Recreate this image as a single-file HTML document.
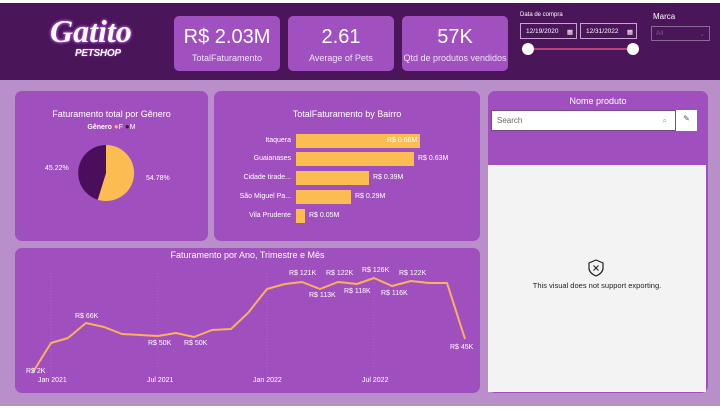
<!DOCTYPE html>
<html><head><meta charset="utf-8"><style>
*{margin:0;padding:0;box-sizing:border-box}
body{width:720px;height:411px;background:#fff;font-family:"Liberation Sans",sans-serif;position:relative;overflow:hidden}
.a{position:absolute}
.bg{left:0;top:3px;width:720px;height:403px;background:#b98fc9}
.top{left:0;top:3px;width:720px;height:77px;background:#4a1559}
.kpi{background:#a150c0;border-radius:5px;color:#fff;text-align:center}
.kpi b{display:block;font-weight:normal;font-size:20px;margin-top:10px}
.kpi i{display:block;font-style:normal;font-size:9px;margin-top:4px;color:#f1e3f6}
.panel{background:#a04fbe;border-radius:7px}
.t{color:#fff;font-size:10px;text-align:center;width:100%}
.sm{font-size:7px;color:#fff}
</style></head><body>
<div class="a bg"></div>
<div class="a top"></div>
<div class="a" style="left:50px;top:13px;color:#fff;font-family:'Liberation Serif',serif;font-style:italic;font-weight:bold;font-size:32px;text-shadow:0 0 3px #a24bc6,0 0 3px #a24bc6,0 0 2px #a24bc6">Gatito</div>
<div class="a" style="left:75px;top:48px;color:#fff;font-weight:bold;font-style:italic;font-size:10px;letter-spacing:-0.3px;text-shadow:0 0 2px #a24bc6">PETSHOP</div>
<div class="a kpi" style="left:174px;top:16px;width:106px;height:55px"><b>R$ 2.03M</b><i>TotalFaturamento</i></div>
<div class="a kpi" style="left:288px;top:16px;width:106px;height:55px"><b>2.61</b><i>Average of Pets</i></div>
<div class="a kpi" style="left:402px;top:16px;width:106px;height:55px"><b>57K</b><i>Qtd de produtos vendidos</i></div>
<div class="a sm" style="left:520px;top:12px;font-size:6px">Data de compra</div>
<div class="a sm" style="left:520px;top:23px;width:57px;height:16px;border:1px solid #c9a3d6;padding:4px 0 0 5px;font-size:6.5px">12/19/2020 <span style="float:right;margin-right:3px">▦</span></div>
<div class="a sm" style="left:580px;top:23px;width:57px;height:16px;border:1px solid #c9a3d6;padding:4px 0 0 5px;font-size:6.5px">12/31/2022 <span style="float:right;margin-right:3px">▦</span></div>
<div class="a" style="left:530px;top:48px;width:103px;height:2px;background:#c0407a"></div>
<div class="a" style="left:522px;top:43px;width:12px;height:12px;border-radius:50%;background:#fff"></div>
<div class="a" style="left:627px;top:43px;width:12px;height:12px;border-radius:50%;background:#fff"></div>
<div class="a" style="left:653px;top:12px;color:#fff;font-size:8px">Marca</div>
<div class="a" style="left:651px;top:26px;width:59px;height:15px;border:1px solid #8a6a99;color:#7e5a8f;font-size:6.5px;padding:3px 0 0 4px">All<span style="float:right;margin-right:4px">⌄</span></div>

<div class="a panel" style="left:15px;top:91px;width:193px;height:150px">
<div class="t" style="margin-top:18px;font-size:9px">Faturamento total por Gênero</div>
<div class="t sm" style="margin-top:3px"><b>Gênero</b> <span style="color:#fbb94e;font-size:8px">●</span>F <span style="color:#4a0f5c;font-size:8px">●</span>M</div>
</div>
<svg class="a" style="left:0;top:0" width="720" height="411">
<path d="M106 173 L106 145 A28 28 0 1 1 97.7 199.7 Z" fill="#fbbd52"/>
<path d="M106 173 L97.7 199.7 A28 28 0 0 1 106 145 Z" fill="#4a0f5c"/>
</svg>
<div class="a sm" style="left:45px;top:165px">45.22%</div>
<div class="a sm" style="left:146px;top:175px">54.78%</div>

<div class="a panel" style="left:214px;top:91px;width:266px;height:150px">
<div class="t" style="margin-top:18px;font-size:9px">TotalFaturamento by Bairro</div>
</div>
<div class="a" style="left:296px;top:134px;width:124px;height:14px;background:#fbbd52"></div>
<div class="a" style="left:296px;top:152px;width:118px;height:14px;background:#fbbd52"></div>
<div class="a" style="left:296px;top:171px;width:73px;height:14px;background:#fbbd52"></div>
<div class="a" style="left:296px;top:190px;width:55px;height:14px;background:#fbbd52"></div>
<div class="a" style="left:296px;top:209px;width:9px;height:14px;background:#fbbd52"></div>
<div class="a sm" style="left:200px;width:91px;text-align:right;top:137px">Itaquera</div>
<div class="a sm" style="left:200px;width:91px;text-align:right;top:155px">Guaianases</div>
<div class="a sm" style="left:200px;width:91px;text-align:right;top:174px">Cidade tirade...</div>
<div class="a sm" style="left:200px;width:91px;text-align:right;top:193px">São Miguel Pa...</div>
<div class="a sm" style="left:200px;width:91px;text-align:right;top:212px">Vila Prudente</div>
<div class="a sm" style="left:387px;top:137px">R$ 0.66M</div>
<div class="a sm" style="left:418px;top:155px">R$ 0.63M</div>
<div class="a sm" style="left:373px;top:174px">R$ 0.39M</div>
<div class="a sm" style="left:355px;top:193px">R$ 0.29M</div>
<div class="a sm" style="left:309px;top:212px">R$ 0.05M</div>

<div class="a panel" style="left:15px;top:248px;width:465px;height:145px">
<div class="t" style="margin-top:2px;font-size:9px">Faturamento por Ano, Trimestre e Mês</div>
</div>
<svg class="a" style="left:0;top:0" width="720" height="411">
<g stroke="#b56ccf" stroke-dasharray="1 2" stroke-width="0.6"><line x1="51" y1="270" x2="51" y2="375"/><line x1="158" y1="270" x2="158" y2="375"/><line x1="267" y1="270" x2="267" y2="375"/><line x1="374" y1="270" x2="374" y2="375"/></g>
<polyline fill="none" stroke="#fbb15e" stroke-width="2" stroke-linejoin="round" points="33,372 51,343 68,338 86,323 104,327 122,334 140,335 158,336 176,333 194,337 212,330 231,329 248,313 267,289 285,284 302,282 320,289 338,282 357,284 374,278 392,286 411,281 429,283 447,283 465,339"/>
</svg>
<div class="a sm" style="left:26px;top:368px">R$ 2K</div>
<div class="a sm" style="left:75px;top:313px">R$ 66K</div>
<div class="a sm" style="left:148px;top:340px">R$ 50K</div>
<div class="a sm" style="left:184px;top:340px">R$ 50K</div>
<div class="a sm" style="left:289px;top:270px">R$ 121K</div>
<div class="a sm" style="left:309px;top:292px">R$ 113K</div>
<div class="a sm" style="left:326px;top:270px">R$ 122K</div>
<div class="a sm" style="left:344px;top:288px">R$ 118K</div>
<div class="a sm" style="left:362px;top:267px">R$ 126K</div>
<div class="a sm" style="left:381px;top:290px">R$ 116K</div>
<div class="a sm" style="left:399px;top:270px">R$ 122K</div>
<div class="a sm" style="left:450px;top:344px">R$ 45K</div>
<div class="a sm" style="left:38px;top:377px">Jan 2021</div>
<div class="a sm" style="left:147px;top:377px">Jul 2021</div>
<div class="a sm" style="left:253px;top:377px">Jan 2022</div>
<div class="a sm" style="left:362px;top:377px">Jul 2022</div>

<div class="a panel" style="left:488px;top:91px;width:220px;height:302px"></div>
<div class="a" style="left:488px;top:165px;width:218px;height:227px;background:#f3f3f3"></div>
<div class="a t" style="left:488px;top:96px;width:220px;font-size:9px">Nome produto</div>
<div class="a" style="left:491px;top:110px;width:185px;height:21px;background:#fff;border:1px solid #7a4a8a;color:#666;font-size:8px;padding:5px 0 0 5px">Search<span style="float:right;margin-right:8px;color:#999">⌕</span></div>
<div class="a" style="left:676px;top:110px;width:21px;height:21px;background:#fff;color:#555;font-size:8px;text-align:center;padding-top:4px">✎</div>
<svg class="a" style="left:587px;top:259px" width="18" height="18"><path d="M9 1 L16 4 L16 9 Q16 14 9 17 Q2 14 2 9 L2 4 Z" fill="none" stroke="#222" stroke-width="1.2"/><path d="M6.5 6.5 L11.5 11.5 M11.5 6.5 L6.5 11.5" stroke="#222" stroke-width="1.1"/></svg>
<div class="a" style="left:488px;top:281px;width:218px;text-align:center;font-size:7.5px;color:#222">This visual does not support exporting.</div>
</body></html>
